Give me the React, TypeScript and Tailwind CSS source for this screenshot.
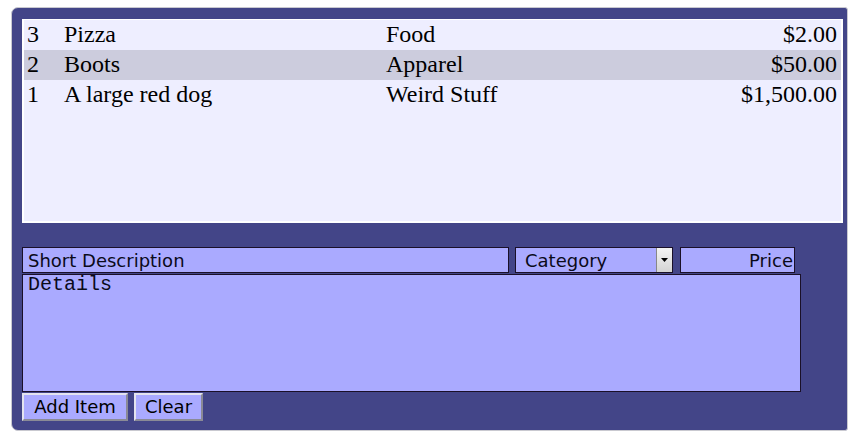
import React from 'react';

interface Item {
  id: number;
  description: string;
  category: string;
  price: string;
}

const items: Item[] = [
  { id: 3, description: 'Pizza', category: 'Food', price: '$2.00' },
  { id: 2, description: 'Boots', category: 'Apparel', price: '$50.00' },
  { id: 1, description: 'A large red dog', category: 'Weird Stuff', price: '$1,500.00' },
];

const sans = "font-['DejaVu_Sans',sans-serif]";

export default function App() {
  return (
    <div className="w-[858px] h-[442px] bg-white pt-[7px] pl-[11px]">
      <div className="w-[837px] h-[424px] bg-[#434588] border border-[#c9c9d0] rounded-l-[7px] rounded-r-[3px] pt-[11px] pl-[10px]">
        {/* item list */}
        <div className="w-[821px] h-[204px] bg-[#eeeeff] border-2 border-t border-white font-['Liberation_Serif',serif] text-[24px] text-black leading-[28px]">
          {items.map((item, index) => (
            <div
              key={item.id}
              className={`flex h-[30px] pl-[3px] pr-[4px] ${index === 1 ? 'bg-[#ccccdd]' : ''}`}
            >
              <span className="w-[37px] shrink-0">{item.id}</span>
              <span className="w-[322px] shrink-0">{item.description}</span>
              <span className="flex-1">{item.category}</span>
              <span className="text-right">{item.price}</span>
            </div>
          ))}
        </div>

        {/* form */}
        <div className="mt-[24px] flex flex-col gap-[1px]">
          <div className={`flex h-[26px] ${sans} text-[18px] text-[#0a0a1a]`}>
            <input
              readOnly
              value="Short Description"
              className="w-[487px] h-[26px] bg-[#aaaaff] border border-[#1a1028] px-[5px] leading-[24px] outline-none"
            />
            <div className="ml-[6px] w-[158px] h-[26px] bg-[#aaaaff] border border-[#1a1028] flex">
              <span className="flex-1 pl-[9px] leading-[25px]">Category</span>
              <span className="w-[16px] h-full bg-gradient-to-b from-[#f4f4f4] to-[#d4d4d4] border-l border-[#888] flex items-center justify-center">
                <svg width="7" height="4" viewBox="0 0 7 4">
                  <path d="M0 0 H7 L3.5 4 Z" fill="#000" />
                </svg>
              </span>
            </div>
            <input
              readOnly
              value="Price"
              className="ml-[7px] w-[115px] h-[26px] bg-[#aaaaff] border border-[#1a1028] px-[1px] text-right leading-[24px] outline-none"
            />
          </div>
          <textarea
            readOnly
            value="Details"
            className="w-[779px] h-[118px] bg-[#aaaaff] border border-[#1a1028] px-[5px] py-0 font-['Liberation_Mono',monospace] text-[20px] leading-[20px] text-[#0a0a1a] resize-none outline-none"
          />
          <div className={`flex gap-[6px] ${sans} text-[18px] text-black`}>
            <button className="w-[106px] h-[28px] bg-[#aaaaff] border-2 border-t-[#e4e4ee] border-l-[#e4e4ee] border-r-[#8a8a96] border-b-[#8a8a96] leading-[24px]">
              Add Item
            </button>
            <button className="w-[69px] h-[28px] bg-[#aaaaff] border-2 border-t-[#e4e4ee] border-l-[#e4e4ee] border-r-[#8a8a96] border-b-[#8a8a96] leading-[24px]">
              Clear
            </button>
          </div>
        </div>
      </div>
    </div>
  );
}
